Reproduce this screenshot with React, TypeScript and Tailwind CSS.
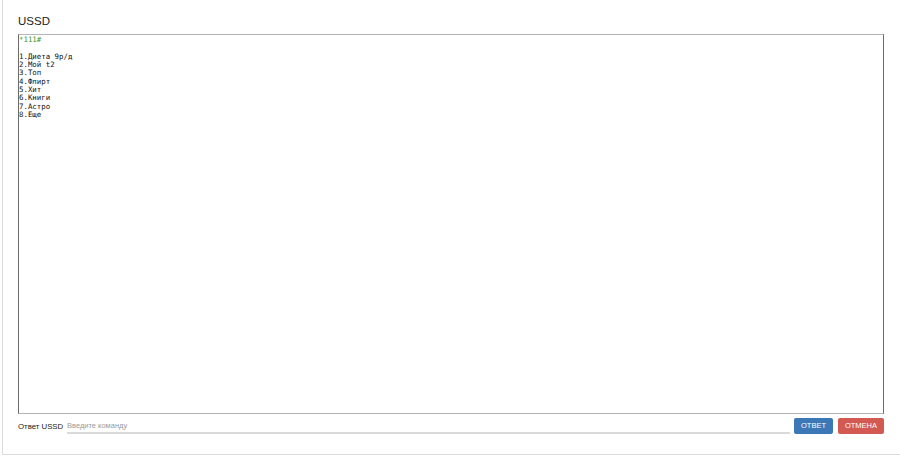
export default function App() {
  const lines = ["1.Диета 9р/д", "2.Мой t2", "3.Топ", "4.Флирт", "5.Хит", "6.Книги", "7.Астро", "8.Еще"];

  return (
    <div className="h-[456px] w-[900px] bg-white pl-[2px] font-['Liberation_Sans',Arial,sans-serif]">
      <div className="flex h-[455px] flex-col border-b border-l border-[#dcdcdc] pl-[15px] pr-[16px] pt-[14px]">
        <h2 className="h-[20px] text-[11.5px] leading-[14px] text-[#222]">USSD</h2>
        <div className="h-[380px] border-x border-t border-b border-x-[#6b6b6b] border-y-[#b5b5b5] pt-[1px] font-['DejaVu_Sans_Mono',monospace] text-[7.4px] leading-[8.35px] text-[#111]">
          <div className="text-[#3a9428]">*111#</div>
          <div className="h-[8.35px]" />
          {lines.map((l) => (
            <div key={l}>{l}</div>
          ))}
        </div>
        <div className="mt-[4px] flex h-[16px] items-center">
          <span className="w-[49px] shrink-0 pt-[1px] text-[7.8px] font-medium text-[#222]">Ответ USSD</span>
          <div className="flex h-[16px] flex-1 items-center border-b-2 border-[#dadada]">
            <span className="pt-[1px] text-[7.5px] text-[#9a9a9a]">Введите команду</span>
          </div>
          <button className="ml-[4px] h-[16px] w-[39px] rounded-[2px] bg-[#3c77b6] text-[7.5px] text-white">
            ОТВЕТ
          </button>
          <button className="ml-[5px] h-[16px] w-[46px] rounded-[2px] bg-[#d25a52] text-[7.5px] text-white">
            ОТМЕНА
          </button>
        </div>
      </div>
    </div>
  );
}
